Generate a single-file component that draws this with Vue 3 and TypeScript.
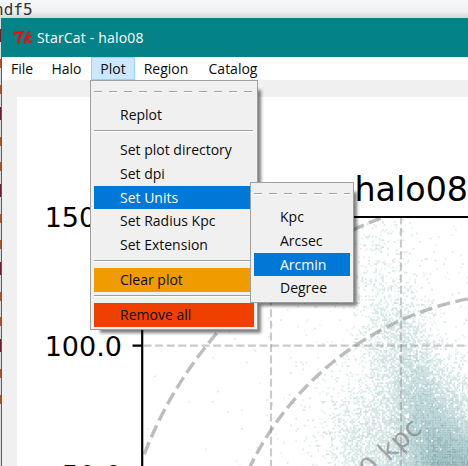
<script setup lang="ts">
interface MenuEntry {
  label?: string
  kind: 'tear' | 'item' | 'line'
  tone?: string
}

const bar: { label: string; open?: boolean }[] = [
  { label: 'File' }, { label: 'Halo' }, { label: 'Plot', open: true }, { label: 'Region' }, { label: 'Catalog' },
]

const plotMenu: MenuEntry[] = [
  { kind: 'tear' },
  { kind: 'item', label: 'Replot' },
  { kind: 'line' },
  { kind: 'item', label: 'Set plot directory' },
  { kind: 'item', label: 'Set dpi' },
  { kind: 'item', label: 'Set Units', tone: 'active' },
  { kind: 'item', label: 'Set Radius Kpc' },
  { kind: 'item', label: 'Set Extension' },
  { kind: 'line' },
  { kind: 'item', label: 'Clear plot', tone: 'orange' },
  { kind: 'line' },
  { kind: 'item', label: 'Remove all', tone: 'red' },
]

const unitMenu: MenuEntry[] = [
  { kind: 'tear' },
  { kind: 'item', label: 'Kpc' },
  { kind: 'item', label: 'Arcsec' },
  { kind: 'item', label: 'Arcmin', tone: 'active' },
  { kind: 'item', label: 'Degree' },
]

// Star density: a sum of rotated Gaussian clumps, [x, y, sx, sy, angle, weight]
const clumps: number[][] = [
  [462, 488, 36, 38, -0.5, 2.8],
  [430, 428, 23, 40, -0.35, 1.3],
  [410, 370, 20, 36, -0.3, 0.42],
  [380, 255, 15, 45, -0.08, 0.1],
  [392, 325, 17, 25, 0, 0.2],
  [360, 425, 19, 25, -0.3, 0.26],
  [375, 475, 26, 30, 0, 0.38],
  [412, 400, 54, 78, 0, 0.06],
  [350, 400, 120, 110, 0, 0.003],
]
const shades: string[] = ['#e6f1f0', '#d9e9e8', '#cbe0df', '#bcd5d5', '#adcbcc', '#9ebfc2', '#90b1b6', '#84a3aa']
const step = 1.7

let seed = 8675309
function random(): number {
  seed = (seed * 1664525 + 1013904223) % 4294967296
  return seed / 4294967296
}

function density(x: number, y: number): number {
  let sum = 0
  for (const [cx, cy, sx, sy, a, w] of clumps) {
    const dx = x - cx
    const dy = y - cy
    const u = (dx * Math.cos(a) + dy * Math.sin(a)) / sx
    const v = (-dx * Math.sin(a) + dy * Math.cos(a)) / sy
    sum += w * Math.exp(-(u * u + v * v) / 2)
  }
  return sum
}

const layers: string[] = shades.map(() => '')
for (let y = 219; y < 466; y += step) {
  for (let x = 144; x < 468; x += step) {
    const d = density(x, y)
    if (random() < 1 - Math.exp(-d * 2)) {
      const level = Math.min(shades.length - 1, Math.max(0, Math.floor(d * 1.9 + random() * 2)))
      layers[level] += `M${x.toFixed(2)} ${y.toFixed(2)}h${step}v${step}h-${step}z`
    }
  }
}

// Radius rings share one centre; each arc runs between two angles above the horizontal
function ring(r: number, from: number, to: number): string {
  const at = (t: number) => `${(527.5 - r * Math.cos(t)).toFixed(2)} ${(601.5 - r * Math.sin(t)).toFixed(2)}`
  return `M${at(from)}A${r} ${r} 0 0 1 ${at(to)}`
}
const rings: string[] = [ring(410.5, 0.367, 1.21), ring(308.5, 0.38, 1.39)]

const marks: { y: number; h: number; fill: string }[] = []
for (let i = 0; i < 5; i++) {
  const y = 29 + i * 77.5
  marks.push({ y, h: 13, fill: '#6b1f2a' }, { y: y + 30, h: 9, fill: '#a4552b' }, { y: y + 55.5, h: 9, fill: '#a4552b' })
}
</script>

<template>
  <div class="screen">
    <div class="behind">hdf5</div>
    <div class="lower">
      <svg class="edge" width="1" height="448" viewBox="0 18 1 448" shape-rendering="crispEdges">
        <rect v-for="m in marks" :key="m.y" x="0" :y="m.y" width="1" :height="m.h" :fill="m.fill" />
      </svg>
      <div class="window">
        <header class="title">
          <svg class="logo" width="20" height="16" viewBox="0 0 20 16" fill="none" stroke="#f40808" stroke-linecap="round" stroke-linejoin="round">
            <path d="M1.400 4.600Q1 2.200 3.400 2.400Q6 2.800 10 1.600" stroke-width="2.200" />
            <path d="M9 2.600Q5.800 6.600 5.400 13" stroke-width="2.400" />
            <path d="M16.400 1.800Q12.800 5 11.600 13" stroke-width="2.100" />
            <path d="M17.800 5.600Q15 6.200 13.200 8.600Q15.800 8.400 15.200 11Q15.400 13 18 11.400" stroke-width="1.900" />
          </svg>
          <span>StarCat - halo08</span>
        </header>
        <nav class="bar">
          <span v-for="b in bar" :key="b.label" class="top" :class="[b.label.toLowerCase(), { open: b.open }]">{{ b.label }}</span>
        </nav>
        <main class="body">
          <svg class="canvas" width="451" height="369" viewBox="17 97 451 369">
            <path v-for="(d, i) in layers" :key="i" :d="d" :fill="shades[i]" />
            <g stroke="#808080" fill="none">
              <g stroke-width="2.100" stroke-dasharray="8 3.600" stroke-opacity=".42">
                <path d="M143.500 345.600H468" />
                <path d="M271 466V218" stroke-dashoffset="2" />
                <path d="M401 466V218" stroke-dashoffset="2" />
              </g>
              <g stroke-width="3.400" stroke-dasharray="12.900 5.500" stroke-opacity=".52">
                <path v-for="r in rings" :key="r" :d="r" />
              </g>
            </g>
            <g stroke="#000" stroke-width="2.200">
              <path d="M142.200 466V217H468" fill="none" />
              <path d="M132.500 217H142M132.500 345.600H142" />
            </g>
            <g class="ticks">
              <text x="44.700" y="227">150.0</text>
              <text x="44.700" y="356">100.0</text>
              <text x="61.700" y="484.500">50.0</text>
            </g>
            <text class="name" x="354.500" y="201">halo08</text>
            <text class="radius" transform="translate(377 473) rotate(-43)" x="-10" y="0">0 kpc</text>
          </svg>
        </main>
      </div>
    </div>

    <div class="menu plot-menu">
      <template v-for="(e, i) in plotMenu" :key="i">
        <div v-if="e.kind === 'item'" class="item" :class="e.tone"><span>{{ e.label }}</span></div>
        <div v-else :class="e.kind"></div>
      </template>
    </div>
    <div class="menu sub">
      <template v-for="(e, i) in unitMenu" :key="i">
        <div v-if="e.kind === 'item'" class="item" :class="e.tone"><span>{{ e.label }}</span></div>
        <div v-else :class="e.kind"></div>
      </template>
    </div>
  </div>
</template>

<style>
body {
  margin: 0;
  overflow: hidden;
}
</style>

<style scoped>
.screen {
  position: relative;
  width: 468px;
  height: 466px;
  overflow: hidden;
  display: flex;
  flex-direction: column;
  font-family: "Open Sans", "Noto Sans", sans-serif;
  font-size: 14px;
  color: #0c0c0c;
}
.behind {
  height: 18px;
  box-sizing: border-box;
  padding-top: 1px;
  background: linear-gradient(#f7f8fa 0, #f0f1f3 60%, #d6d8da 100%);
  font: 16px/18px "DejaVu Sans Mono", monospace;
  text-indent: -6px;
  color: #333;
}
.lower {
  display: flex;
  height: 448px;
}
.edge {
  display: block;
  background: #d9dcde;
}
.window {
  width: 467px;
  box-sizing: border-box;
  border-left: 1px solid #038387;
}
.title {
  display: flex;
  align-items: center;
  height: 39px;
  box-sizing: border-box;
  padding-left: 11px;
  background: #038387;
  color: #fff;
  letter-spacing: 0.17px;
}
.logo {
  margin-right: 4px;
}
.bar {
  display: flex;
  height: 23px;
  background: #fff;
  line-height: 24px;
}
.top {
  box-sizing: border-box;
  text-align: center;
  white-space: nowrap;
}
.file { width: 40px; }
.halo { width: 49px; }
.plot { width: 44px; }
.region { width: 62px; }
.catalog { width: 72px; }
.open {
  background: #cce8ff;
  box-shadow: inset 0 0 0 1px #99d1ff;
}
.body {
  height: 386px;
  box-sizing: border-box;
  padding: 17px 0 0 15px;
  background: #f0f0f0;
}
.canvas {
  display: block;
  background: #fff;
}
text {
  font-family: "DejaVu Sans", sans-serif;
}
.ticks {
  font-size: 27px;
}
.name {
  font-size: 33.3px;
}
.radius {
  font-size: 27px;
  fill: #777;
  fill-opacity: 0.65;
}
.menu {
  position: absolute;
  box-sizing: border-box;
  padding: 3px;
  border: 1px solid #a0a0a0;
}
.menu::before {
  content: "";
  position: absolute;
  z-index: -1;
  inset: 8px -1px -1px 8px;
  box-shadow: 2px 2px 3px 1px rgba(0, 0, 0, 0.5);
}
.menu::after {
  content: "";
  position: absolute;
  z-index: -1;
  inset: 0;
  background: #f0f0f0;
}
.plot-menu {
  left: 90px;
  top: 80px;
  width: 168px;
  height: 250px;
  z-index: 1;
}
.sub {
  left: 250px;
  top: 182px;
  width: 104px;
  height: 121px;
  z-index: 2;
}
.item {
  height: 23.8px;
  padding-left: 26px;
  line-height: 24px;
  white-space: nowrap;
}
.active {
  background: #0078d7;
  color: #fff;
}
.orange {
  background: #f09c00;
}
.red {
  background: #f04000;
}
.tear {
  height: 19px;
  background:
    repeating-linear-gradient(90deg, #a0a0a0 0 8px, transparent 8px 15px) 0 7px / 159px 1px no-repeat,
    repeating-linear-gradient(90deg, #fff 0 8px, transparent 8px 15px) 0 8px / 159px 1px no-repeat;
}
.line {
  height: 11.2px;
  background: linear-gradient(#a0a0a0 0 1px, #fff 1px 2px) 0 3px / 159px 2px no-repeat;
}
</style>
